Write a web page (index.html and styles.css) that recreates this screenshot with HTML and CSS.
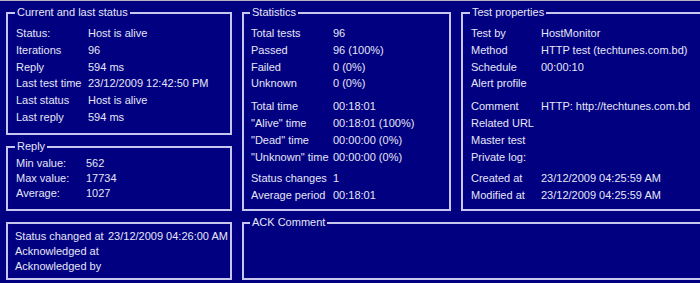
FILE: index.html
```html
<!DOCTYPE html>
<html lang="en">
<head>
    <meta charset="UTF-8">
    <meta name="viewport" content="width=device-width, initial-scale=1.0">
    <title>Test info</title>
    <link rel="stylesheet" href="styles.css">
</head>
<body>
    <div class="screen">
        <div class="col-left">
            <fieldset class="group status">
                <legend>Current and last status</legend>
                <dl class="rows">
                    <dt>Status:</dt><dd>Host is alive</dd>
                    <dt>Iterations</dt><dd>96</dd>
                    <dt>Reply</dt><dd>594 ms</dd>
                    <dt>Last test time</dt><dd>23/12/2009 12:42:50 PM</dd>
                    <dt>Last status</dt><dd>Host is alive</dd>
                    <dt>Last reply</dt><dd>594 ms</dd>
                </dl>
            </fieldset>

            <fieldset class="group reply">
                <legend>Reply</legend>
                <dl class="rows small">
                    <dt>Min value:</dt><dd>562</dd>
                    <dt>Max value:</dt><dd>17734</dd>
                    <dt>Average:</dt><dd>1027</dd>
                </dl>
            </fieldset>
        </div>

        <fieldset class="group stats">
            <legend>Statistics</legend>
            <dl class="rows">
                <dt>Total tests</dt><dd>96</dd>
                <dt>Passed</dt><dd>96 (100%)</dd>
                <dt>Failed</dt><dd>0 (0%)</dd>
                <dt>Unknown</dt><dd>0 (0%)</dd>
            </dl>
            <dl class="rows sep">
                <dt>Total time</dt><dd>00:18:01</dd>
                <dt>"Alive" time</dt><dd>00:18:01 (100%)</dd>
                <dt>"Dead" time</dt><dd>00:00:00 (0%)</dd>
                <dt>"Unknown" time</dt><dd>00:00:00 (0%)</dd>
            </dl>
            <dl class="rows sep2">
                <dt>Status changes</dt><dd>1</dd>
                <dt>Average period</dt><dd>00:18:01</dd>
            </dl>
        </fieldset>

        <fieldset class="group props">
            <legend>Test properties</legend>
            <dl class="rows">
                <dt>Test by</dt><dd>HostMonitor</dd>
                <dt>Method</dt><dd>HTTP test (techtunes.com.bd)</dd>
                <dt>Schedule</dt><dd>00:00:10</dd>
                <dt>Alert profile</dt><dd></dd>
            </dl>
            <dl class="rows sep">
                <dt>Comment</dt><dd>HTTP: http://techtunes.com.bd</dd>
                <dt>Related URL</dt><dd></dd>
                <dt>Master test</dt><dd></dd>
                <dt>Private log:</dt><dd></dd>
            </dl>
            <dl class="rows sep2">
                <dt>Created at</dt><dd>23/12/2009 04:25:59 AM</dd>
                <dt>Modified at</dt><dd>23/12/2009 04:25:59 AM</dd>
            </dl>
        </fieldset>

        <div class="group events">
            <dl class="rows small">
                <dt>Status changed at</dt><dd>23/12/2009 04:26:00 AM</dd>
                <dt>Acknowledged at</dt><dd></dd>
                <dt>Acknowledged by</dt><dd></dd>
            </dl>
        </div>

        <fieldset class="group ack">
            <legend>ACK Comment</legend>
        </fieldset>
    </div>
</body>
</html>
```

FILE: styles.css
```css
body {
    margin: 0;
    background-color: #000080;
    color: #e6e6f6;
    font-family: "Liberation Sans", Arial, sans-serif;
    font-size: 11px;
    overflow: hidden;
}

.screen {
    border-top: 1px solid #b4b4c4;
    padding: 5px 0 0 6px;
    display: grid;
    grid-template-columns: 226px 209px 260px;
    grid-template-rows: 205px 64px;
    column-gap: 10px;
    row-gap: 5px;
}

.col-left {
    display: flex;
    flex-direction: column;
    gap: 5px;
}

.group {
    margin: 0;
    min-width: 0;
    border: 2px solid #c6c6ee;
    padding: 6px 0 0 7px;
}

.group legend {
    padding: 0 2px;
    margin-left: -1px;
    line-height: 13px;
}

.status {
    height: 129px;
    box-sizing: border-box;
    padding-left: 8px;
}

.reply {
    flex: 1;
    padding-top: 3px;
    padding-left: 8px;
}

.props {
    padding-left: 8px;
}

.events {
    margin-top: 6px;
    padding-top: 5px;
    padding-left: 7px;
}

.ack {
    grid-column: 2 / 4;
}

.rows {
    display: grid;
    grid-template-columns: 72px auto;
    margin: 0;
}

.rows dt,
.rows dd {
    margin: 0;
    line-height: 16.8px;
    white-space: nowrap;
}

.rows.small dt,
.rows.small dd {
    line-height: 15px;
}

.stats .rows {
    grid-template-columns: 82px auto;
}

.props .rows {
    grid-template-columns: 70px auto;
}

.reply .rows {
    grid-template-columns: 70px auto;
}

.events .rows {
    grid-template-columns: 93px auto;
}

.sep {
    margin-top: 6px;
}

.sep2 {
    margin-top: 5px;
}
```
